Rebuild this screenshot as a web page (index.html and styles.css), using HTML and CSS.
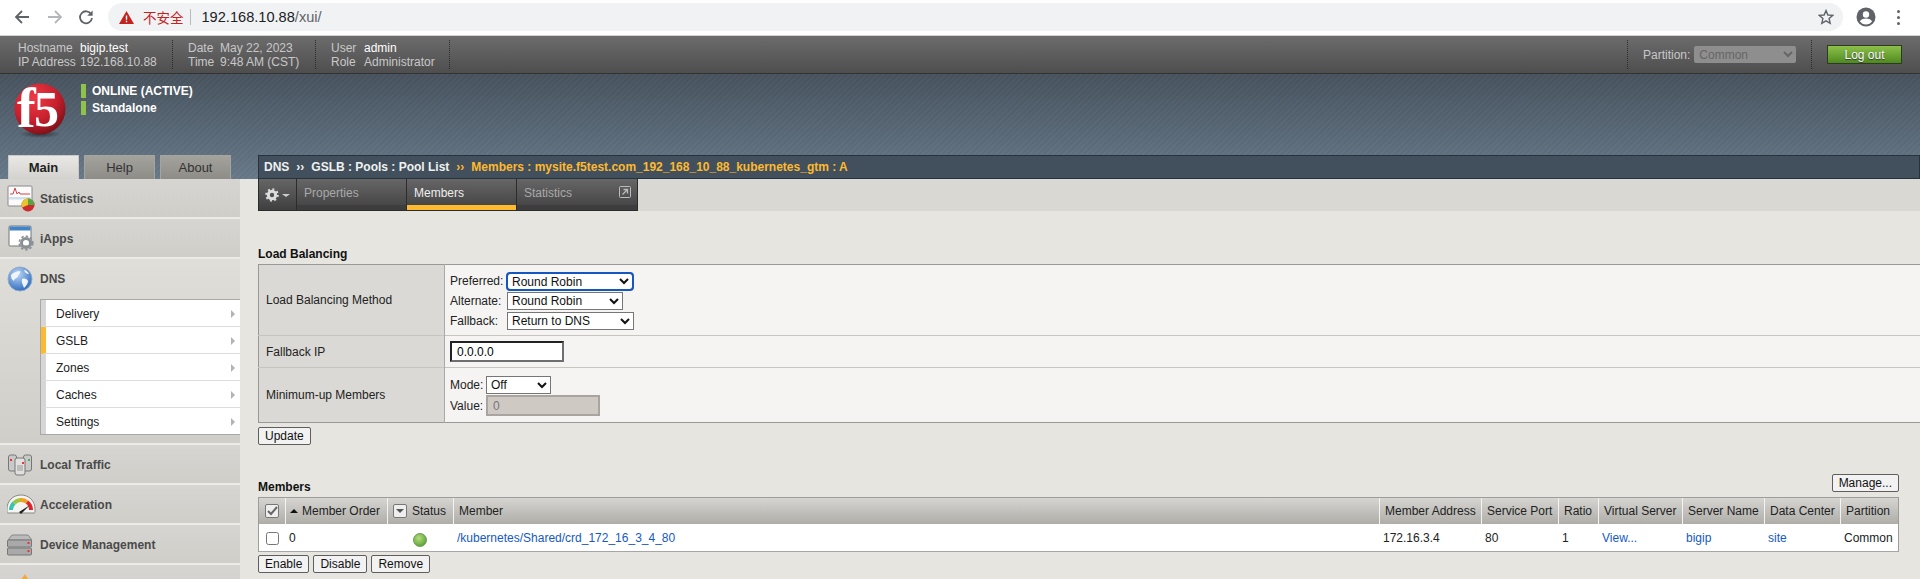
FILE: index.html
```html
<!DOCTYPE html>
<html lang="en">
<head>
<meta charset="utf-8">
<title>BIG-IP</title>
<link rel="stylesheet" href="styles.css">
</head>
<body>
<header class="chrome">
  <svg class="nav-ico" width="16" height="16" viewBox="0 0 16 16"><path d="M15 8H2.500M8 2 2 8l6 6" fill="none" stroke="#5f6368" stroke-width="1.800"/></svg>
  <svg class="nav-ico" width="16" height="16" viewBox="0 0 16 16"><path d="M1 8h12.500M8 2l6 6-6 6" fill="none" stroke="#b4b6b9" stroke-width="1.800"/></svg>
  <svg class="nav-ico" width="16" height="16" viewBox="0 0 16 16"><path d="M13.200 5.200A6 6 0 1 0 14 9" fill="none" stroke="#5f6368" stroke-width="1.800"/><path d="M14.600 1.400v5.400H9.200z" fill="#5f6368"/></svg>
  <div class="omnibox">
    <svg class="warn" width="15" height="13" viewBox="0 0 15 13"><path d="M7.500 0 15 13H0z" fill="#c5221f"/><path d="M6.800 4.500h1.400v4.200H6.800zM6.800 9.800h1.400v1.400H6.800z" fill="#fff"/></svg>
    <span class="insecure">不安全</span>
    <span class="url"><b>192.168.10.88</b>/xui/</span>
    <svg class="star" width="16" height="16" viewBox="0 0 16 16"><path d="m8 1.600 1.900 4.400 4.800.4-3.600 3.200 1.100 4.700L8 11.800l-4.200 2.500 1.100-4.700L1.300 6.400l4.800-.4z" fill="none" stroke="#5f6368" stroke-width="1.400"/></svg>
  </div>
  <svg class="avatar" width="20" height="20" viewBox="0 0 20 20"><circle cx="10" cy="10" r="9.500" fill="#5f6368"/><circle cx="10" cy="7.500" r="3.200" fill="#fff"/><path d="M3.800 14.200c1.500-2 4-2.700 6.200-2.700s4.700.7 6.200 2.700c-1.400 2-3.700 3.300-6.200 3.300s-4.800-1.300-6.200-3.300z" fill="#fff"/></svg>
  <span class="kebab"><i></i><i></i><i></i></span>
</header>

<section class="topbar">
  <div class="meta meta-host"><span>Hostname</span><b>bigip.test</b><span>IP Address</span><span>192.168.10.88</span></div>
  <div class="meta meta-date"><span>Date</span><span>May 22, 2023</span><span>Time</span><span>9:48 AM (CST)</span></div>
  <div class="meta meta-user"><span>User</span><b>admin</b><span>Role</span><span>Administrator</span></div>
  <div class="top-spacer"></div>
  <div class="partition"><label>Partition:</label><select disabled><option>Common</option></select></div>
  <button class="logout" type="button">Log out</button>
</section>

<section class="banner">
  <div class="brand">
    <svg class="logo" width="56" height="56" viewBox="0 0 56 56">
      <defs>
        <radialGradient id="ball" cx="38%" cy="28%" r="75%"><stop offset="0" stop-color="#ee3a46"/><stop offset=".6" stop-color="#c8202e"/><stop offset="1" stop-color="#7d1018"/></radialGradient>
        <radialGradient id="shadow"><stop offset="0" stop-color="#20282e" stop-opacity=".8"/><stop offset="1" stop-color="#20282e" stop-opacity="0"/></radialGradient>
      </defs>
      <ellipse cx="27" cy="50" rx="21" ry="4" fill="url(#shadow)"/>
      <circle cx="27" cy="25" r="25.500" fill="url(#ball)"/>
      <text class="logo-f" x="4" y="43">f</text>
      <text class="logo-5" x="21" y="42">5</text>
    </svg>
    <div class="states">
      <div class="state">ONLINE (ACTIVE)</div>
      <div class="state">Standalone</div>
    </div>
  </div>
  <div class="band-row">
    <nav class="tabs">
      <span class="tab tab-on">Main</span>
      <span class="tab">Help</span>
      <span class="tab">About</span>
    </nav>
    <div class="crumb">DNS<i>››</i>GSLB : Pools : Pool List<i class="cur">››</i><span class="cur">Members : mysite.f5test.com_192_168_10_88_kubernetes_gtm : A</span></div>
  </div>
</section>

<div class="work">
  <aside class="side">
    <div class="sec">
      <svg width="30" height="30" viewBox="0 0 30 30"><rect x="1" y="2" width="24" height="20" rx="1" fill="#fbfbfb" stroke="#8a8a8a"/><path d="M3 10h3l2-6 2 6 2-2 1 2h10" fill="none" stroke="#d8434a"/><rect x="2" y="13" width="22" height="2.500" fill="#cfe0ef"/><circle cx="21" cy="21" r="6.500" fill="#cf2a2f"/><path d="M21 21v-6.500a6.500 6.500 0 0 1 6.500 6.500z" fill="#54a642"/><path d="M21 21v-6.500a6.500 6.500 0 0 0-6 9z" fill="#e8c52a"/></svg>
      <span>Statistics</span>
    </div>
    <div class="sec">
      <svg width="30" height="30" viewBox="0 0 30 30"><rect x="2" y="2" width="22" height="20" rx="1" fill="#fff" stroke="#777"/><rect x="2.500" y="2.500" width="21" height="4" fill="#3f83c9"/><circle cx="19" cy="19" r="4.500" fill="none" stroke="#8a9094" stroke-width="3"/><circle cx="19" cy="19" r="6.800" fill="none" stroke="#8a9094" stroke-width="1.600" stroke-dasharray="2.500 2"/></svg>
      <span>iApps</span>
    </div>
    <div class="sec-open">
      <div class="sec sec-plain">
        <svg width="30" height="30" viewBox="0 0 30 30"><defs><radialGradient id="globe" cx="40%" cy="30%" r="75%"><stop offset="0" stop-color="#bcd8f6"/><stop offset="1" stop-color="#2a67bd"/></radialGradient></defs><circle cx="13" cy="15" r="12" fill="url(#globe)" stroke="#8fa9c8"/><path d="M4 11c3-3 6-4 9-4 1 2-1 3-2 5-1 3-4 2-4 5-2-1-3-3-3-6zM15 15c3-1 5 0 6 2 0 3-3 6-4 7-1-3-3-6-2-9zM17 6c2 0 4 2 5 4-2 0-4-1-5-4z" fill="#f0f5fb"/></svg>
        <span>DNS</span>
      </div>
      <ul class="submenu">
        <li><span>Delivery</span><i></i></li>
        <li class="sub-on"><span>GSLB</span><i></i></li>
        <li><span>Zones</span><i></i></li>
        <li><span>Caches</span><i></i></li>
        <li><span>Settings</span><i></i></li>
      </ul>
    </div>
    <div class="sec">
      <svg width="30" height="30" viewBox="0 0 30 30"><rect x="1.500" y="5" width="8" height="16" rx="2" fill="#c9c9c9" stroke="#777"/><rect x="16.500" y="5" width="8" height="16" rx="2" fill="#c9c9c9" stroke="#777"/><rect x="8" y="8" width="10" height="17" rx="2" fill="#e0e0e0" stroke="#777"/><rect x="3" y="9" width="2" height="2" fill="#e33"/><rect x="21" y="9" width="2" height="2" fill="#5a5"/><rect x="15" y="12" width="2" height="2" fill="#e33"/><path d="M10 16h6M10 18h6M10 20h6" stroke="#999"/></svg>
      <span>Local Traffic</span>
    </div>
    <div class="sec">
      <svg width="30" height="30" viewBox="0 0 30 30"><path d="M0 22v-3C0 11 6 5 14 5s14 6 14 14v3c0 1-1 1-1 1H1s-1 0-1-1z" fill="#f4f4f2" stroke="#888"/><path d="M4 20a10 10 0 0 1 3-7" fill="none" stroke="#3cc3b0" stroke-width="4"/><path d="M7 13a10 10 0 0 1 6-3" fill="none" stroke="#9ac53c" stroke-width="4"/><path d="M13 10a10 10 0 0 1 7 2" fill="none" stroke="#f0a020" stroke-width="4"/><path d="M24 20a10 10 0 0 0-4-8" fill="none" stroke="#e0252c" stroke-width="4"/><path d="m12 22 11-7-9 9z" fill="#222"/></svg>
      <span>Acceleration</span>
    </div>
    <div class="sec">
      <svg width="30" height="30" viewBox="0 0 30 30"><path d="M1 10 5 5h16l4 5z" fill="#bbb" stroke="#888"/><rect x=".5" y="10" width="24" height="7" rx="1" fill="#a9a9a9" stroke="#777"/><rect x=".5" y="18" width="24" height="7" rx="1" fill="#a9a9a9" stroke="#777"/><rect x="20.500" y="12" width="2" height="2" fill="#e33"/><rect x="20.500" y="20" width="2" height="2" fill="#e33"/></svg>
      <span>Device Management</span>
    </div>
    <div class="sec">
      <svg width="30" height="30" viewBox="0 0 30 30"><path d="M18 4c2 4 6 8 6 13a7 7 0 0 1-14 0c0-5 6-9 8-13z" fill="#f2a93b"/></svg>
      <span></span>
    </div>
  </aside>

  <main class="main">
    <div class="subtabs">
      <div class="gear-tab">
        <svg width="14" height="14" viewBox="0 0 14 14"><circle cx="7" cy="7" r="3.700" fill="none" stroke="#ddd" stroke-width="3"/><circle cx="7" cy="7" r="5.800" fill="none" stroke="#ddd" stroke-width="2" stroke-dasharray="2 2.500"/></svg>
        <i></i>
      </div>
      <div class="subtab">Properties</div>
      <div class="subtab subtab-on">Members</div>
      <div class="subtab subtab-wide">Statistics
        <svg width="12" height="12" viewBox="0 0 12 12"><rect x=".5" y=".5" width="11" height="11" rx="1" fill="none" stroke="#bbb"/><path d="M3.500 8.500 8 4M4.500 3.500H8.500V7.500" fill="none" stroke="#bbb" stroke-width="1.300"/></svg>
      </div>
    </div>

    <div class="body">
      <h2 class="title title-lb">Load Balancing</h2>
      <table class="form">
        <tr class="r-method">
          <th>Load Balancing Method</th>
          <td>
            <div class="pick"><label>Preferred:</label><select class="s-pref"><option>Round Robin</option></select></div>
            <div class="pick"><label>Alternate:</label><select class="s-alt"><option>Round Robin</option></select></div>
            <div class="pick"><label>Fallback:</label><select class="s-fall"><option>Return to DNS</option></select></div>
          </td>
        </tr>
        <tr class="r-ip">
          <th>Fallback IP</th>
          <td><input class="ip" type="text" value="0.0.0.0"></td>
        </tr>
        <tr class="r-min">
          <th>Minimum-up Members</th>
          <td>
            <div class="pick pick-short"><label>Mode:</label><select class="s-mode"><option>Off</option></select></div>
            <div class="pick pick-short"><label>Value:</label><input class="val" type="text" value="0" disabled></div>
          </td>
        </tr>
      </table>
      <div class="btns btns-update"><button type="button">Update</button></div>

      <div class="members">
        <div class="mem-head">
          <h2 class="title">Members</h2>
          <button type="button">Manage...</button>
        </div>
        <table class="list">
          <colgroup>
            <col class="c-chk"><col class="c-ord"><col class="c-st"><col><col class="c-addr"><col class="c-port"><col class="c-ratio"><col class="c-vs"><col class="c-sn"><col class="c-dc"><col class="c-part">
          </colgroup>
          <thead>
            <tr>
              <th class="ctr"><span class="hchk"><svg width="11" height="10" viewBox="0 0 11 10"><path d="m1 5 3 3 6-7" fill="none" stroke="#666" stroke-width="2"/></svg></span></th>
              <th class="th-ord"><i class="up"></i>Member Order</th>
              <th class="th-st"><span class="hdrop"><i class="down"></i></span><span class="st-label">Status</span></th>
              <th>Member</th>
              <th>Member Address</th>
              <th>Service Port</th>
              <th>Ratio</th>
              <th>Virtual Server</th>
              <th>Server Name</th>
              <th>Data Center</th>
              <th>Partition</th>
            </tr>
          </thead>
          <tbody>
            <tr>
              <td class="ctr"><input type="checkbox"></td>
              <td class="td-ord">0</td>
              <td class="ctr"><span class="ball"></span></td>
              <td><a>/kubernetes/Shared/crd_172_16_3_4_80</a></td>
              <td>172.16.3.4</td>
              <td>80</td>
              <td>1</td>
              <td><a>View...</a></td>
              <td><a>bigip</a></td>
              <td><a>site</a></td>
              <td>Common</td>
            </tr>
          </tbody>
        </table>
        <div class="btns"><button type="button">Enable</button><button type="button">Disable</button><button type="button">Remove</button></div>
      </div>
    </div>
  </main>
</div>
</body>
</html>
```

FILE: styles.css
```css
* { box-sizing: border-box; }
html, body { margin: 0; height: 579px; overflow: hidden; }
body { font: 12px "Liberation Sans", Arial, sans-serif; color: #222; background: #e6e5e0; }

/* browser chrome */
.chrome { height: 36px; background: #fff; border-bottom: 1px solid #d4d4d4; display: flex; align-items: center; padding: 0 20px 1px 14px; }
.nav-ico { flex: none; margin-right: 17px; }
.nav-ico:nth-child(2) { margin-right: 15px; }
.nav-ico:nth-child(3) { margin-right: 14px; }
.omnibox { flex: 1; height: 28px; border-radius: 14px; background: #f0f2f4; display: flex; align-items: center; padding: 0 9px 0 11px; }
.warn { flex: none; }
.insecure { color: #c5221f; font: 13.500px "Noto Sans CJK SC", sans-serif; margin-left: 9px; padding-right: 6px; border-right: 1px solid #bbb; line-height: 16px; }
.url { margin-left: 11px; font-size: 14.600px; color: #5f6368; flex: 1; }
.url b { font-weight: 400; color: #202124; }
.avatar { margin: 0 0 0 13px; flex: none; }
.kebab { display: flex; flex-direction: column; gap: 3px; margin-left: 21px; width: 3px; }
.kebab i { width: 3px; height: 3px; border-radius: 50%; background: #5f6368; }

/* top status bar */
.topbar { height: 38px; background: linear-gradient(#6c6c6c, #4e4e4e); border-bottom: 1px solid #333; display: flex; align-items: center; color: #c8c8c8; line-height: 14px; padding-left: 18px; white-space: nowrap; }
.meta { display: grid; column-gap: 4px; height: 29px; align-content: center; border-right: 1px dotted #2c2c2c; }
.meta b { font-weight: 400; color: #fff; }
.meta-host { grid-template-columns: 58px auto; width: 155px; }
.meta-date { grid-template-columns: 28px auto; width: 143px; padding-left: 15px; }
.meta-user { grid-template-columns: 29px auto; width: 134px; padding-left: 15px; }
.top-spacer { flex: 1; }
.partition { display: flex; align-items: center; gap: 4px; height: 29px; width: 185px; padding-left: 15px; border-left: 1px dotted #2c2c2c; border-right: 1px dotted #2c2c2c; }
.partition select { width: 102px; height: 17px; border: 0; border-radius: 2px; background-color: #8e8e8e; color: #666; opacity: 1; font: 12px "Liberation Sans", sans-serif; padding: 0 0 0 1px; }
.logout { width: 75px; height: 19px; margin: 0 18px 0 15px; border: 1px solid #2d3b22; border-radius: 0; color: #fff; font: 12px "Liberation Sans", sans-serif; background: linear-gradient(#8cc04a, #4f8a20); padding: 0; text-shadow: 0 1px 1px #333; }

/* banner */
.banner { height: 105px; display: flex; flex-direction: column; justify-content: space-between;
  background: repeating-linear-gradient(135deg, rgba(255,255,255,.02) 0 2px, rgba(0,0,0,.02) 2px 4px), linear-gradient(#47535e, #68798a); }
.brand { display: flex; padding: 10px 0 0 13px; }
.logo { flex: none; overflow: visible; }
.logo-f { font: 700 56px "Liberation Serif", serif; fill: #fff; }
.logo-5 { font: 700 50px "Liberation Serif", serif; fill: #fff; }
.states { margin-left: 12px; }
.state { height: 14px; margin-bottom: 3px; border-left: 5px solid #8fc24a; padding-left: 6px; color: #fff; font-weight: 700; line-height: 14px; }
.band-row { display: flex; align-items: flex-end; height: 24px; }
.tabs { width: 258px; display: flex; gap: 5px; padding-left: 8px; }
.tab { width: 71px; height: 24px; border: 1px solid #a5a5a0; border-bottom: 0; background: linear-gradient(#a3a29d, #8d8c87); color: #333; font-size: 13px; text-align: center; line-height: 23px; }
.tab-on { background: linear-gradient(#e9e8e5, #d3d2ce); border-color: #c6cacc; color: #222; font-weight: 700; }
.crumb { flex: 1; height: 24px; background: #41505c; border: 1px solid #27333c; color: #f0f0f0; font-weight: 700; line-height: 22px; padding-left: 5px; white-space: nowrap; }
.crumb i { font-style: normal; margin: 0 7px; }
.cur { color: #fdb92f; }

/* workspace */
.work { display: flex; height: 400px; }
.side { width: 240px; flex: none; background: #d2d1cd; overflow: hidden; }
.sec { height: 40px; display: flex; align-items: center; gap: 3px; padding: 2px 0 0 7px; border-bottom: 2px solid #ecebe8; background: linear-gradient(#d6d5d1, #cfcec9); color: #4a4a4a; font-weight: 700; font-size: 12px; }
.sec svg { flex: none; }
.sec-plain { background: none; border: 0; height: 40px; padding-top: 0; }
.sec-open { height: 186px; background: linear-gradient(#dfded9, #cfcec9); border-bottom: 2px solid #ecebe8; }
.submenu { list-style: none; margin: 0 0 0 40px; padding: 0; border: 1px solid #a8a8a8; border-right: 0; background: #fff; }
.submenu li { height: 27px; display: flex; align-items: center; justify-content: space-between; border-left: 5px solid #d6d6d6; border-bottom: 1px solid #ddd; padding: 1px 5px 0 10px; color: #222; }
.submenu li:last-child { border-bottom: 0; height: 26px; }
.submenu .sub-on { border-left-color: #fdb92f; }
.submenu i { width: 0; height: 0; border-left: 4px solid #b3b3b3; border-top: 4px solid transparent; border-bottom: 4px solid transparent; }

/* content */
.main { flex: 1; min-width: 0; }
.subtabs { height: 32px; margin-left: 18px; display: flex; background: #d9d8d3; }
.gear-tab { width: 39px; background: linear-gradient(#666, #3f3f3f); border: 1px solid #2c2c2c; border-top: 0; display: flex; align-items: center; justify-content: center; gap: 3px; padding-top: 1px; }
.gear-tab i { width: 0; height: 0; border-top: 3px solid #ccc; border-left: 4px solid transparent; border-right: 4px solid transparent; }
.subtab { width: 110px; height: 32px; background: linear-gradient(#666 0, #474747 26px, #3d3d3d 26px); border: 1px solid #2c2c2c; border-top: 0; border-left: 0; color: #a9a9a9; padding: 7px 0 0 7px; line-height: 14px; }
.subtab-on { color: #eee; background: linear-gradient(#666 0, #474747 26px, #fdb92f 26px); }
.subtab-wide { width: 121px; display: flex; justify-content: space-between; padding-right: 6px; }

.body { padding-left: 18px; }
.title { margin: 0; font-size: 12px; font-weight: 700; color: #111; line-height: 14px; }
.title-lb { padding-top: 36px; height: 53px; }
.form { width: 100%; border-collapse: collapse; border: 1px solid #999; border-width: 1px 0 1px 1px; background: #f5f4f2; }
.form th, .form td { padding: 0; border-top: 1px solid #c6c5c0; }
.form tr:first-child th, .form tr:first-child td { border-top: 0; }
.form th { width: 186px; background: #dad9d5; border-right: 1px solid #a9a9a9; padding-left: 7px; font-weight: 400; text-align: left; }
.form td { padding-left: 5px; }
.form .r-method td { padding-top: 2px; }
.r-method { height: 71px; }
.r-ip { height: 32px; }
.r-min { height: 55px; }
.pick { display: flex; align-items: center; height: 20px; }
.pick-short { height: 21px; }
.pick label { width: 57px; flex: none; }
.pick-short label { width: 36px; }
select { font: 12px "Liberation Sans", sans-serif; color: #111; background-color: #fff; border: 1px solid #767676; border-radius: 0; padding: 0; }
.s-pref { width: 126px; height: 17px; outline: 2px solid #1457c0; outline-offset: -1px; border-radius: 3px; }
.s-alt { width: 116px; height: 18px; }
.s-fall { width: 127px; height: 18px; }
.s-mode { width: 65px; height: 18px; }
input[type="text"] { font: 12px "Liberation Sans", sans-serif; padding: 0 5px; border-radius: 0; }
.ip { width: 114px; height: 21px; background: #fff; border: 2px solid; border-color: #222 #6f6f6f #6f6f6f #222; }
.val { width: 114px; height: 21px; background: #cfc9c4; border: 2px solid #a9a49f; color: #777; }
.btns { display: flex; gap: 4px; margin-top: 3px; }
.btns-update { margin-top: 4px; }
button { font: 12px "Liberation Sans", sans-serif; }
.body button { height: 18px; padding: 0 6px; background: #f2f2f2; border: 1px solid #5e5e5e; border-radius: 2px; color: #111; line-height: 14px; }
.members { margin-right: 21px; padding-top: 29px; }
.mem-head { display: flex; justify-content: space-between; align-items: flex-end; height: 23px; }
.mem-head .title { margin-bottom: 3px; }
.mem-head button { margin-bottom: 5px; }
.list { width: 100%; table-layout: fixed; border-collapse: separate; border-spacing: 0; border: 1px solid #9c9c9c; border-bottom: 1px solid #a6a6a6; background: #fff; }
.c-chk { width: 26px; } .c-ord { width: 102px; } .c-st { width: 66px; } .c-addr { width: 102px; } .c-port { width: 77px; } .c-ratio { width: 40px; } .c-vs { width: 84px; } .c-sn { width: 82px; } .c-dc { width: 76px; } .c-part { width: 58px; }
.list th { height: 26px; padding: 0 0 1px 5px; font-weight: 400; text-align: left; white-space: nowrap; background: linear-gradient(#d6d5d1, #aeada8); border-left: 1px solid #f3f3f3; color: #222; }
.list th:first-child { border-left: 0; }
.list td { height: 27px; padding: 0 0 1px 4px; white-space: nowrap; border-top: 1px solid #fff; }
.list td a { color: #1559c6; }
.list .ctr { padding-left: 0; text-align: center; }
.list .td-ord { padding-left: 4px; }
.list .th-ord { padding-left: 4px; }
.list .th-st { padding-left: 5px; }
.th-st .hdrop { margin-right: 5px; }
.st-label { vertical-align: middle; }
.hchk, .hdrop { display: inline-flex; align-items: center; justify-content: center; width: 14px; height: 14px; vertical-align: middle; background: #eee; border: 1px solid #777; border-radius: 2px; }
.up, .down { display: inline-block; width: 0; height: 0; border-left: 4px solid transparent; border-right: 4px solid transparent; }
.up { border-bottom: 4px solid #111; margin: 0 4px 2px 0; }
.down { border-top: 4px solid #555; }
.list input[type="checkbox"] { width: 13px; height: 13px; margin: 0; vertical-align: middle; }
.ball { display: inline-block; width: 14px; height: 14px; margin-top: 4px; border-radius: 50%; vertical-align: middle; background: radial-gradient(circle at 40% 35%, #b5dc7f, #62a63a 75%, #4e8a2b); border: 1px solid #6e9a52; }
```
